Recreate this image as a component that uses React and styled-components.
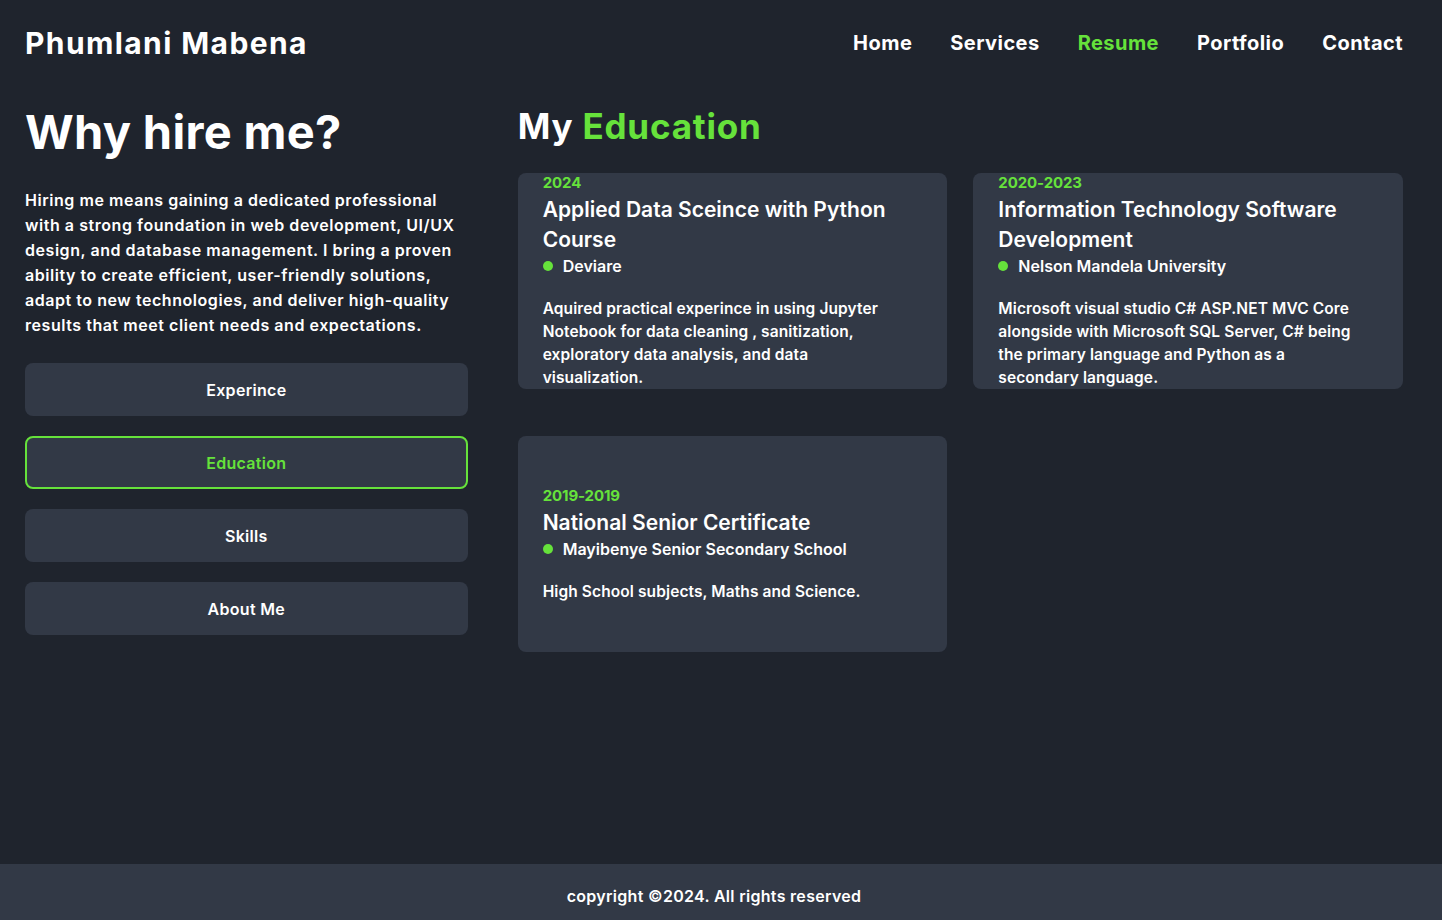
import React from "react";
import styled, { createGlobalStyle } from "styled-components";

const GREEN = "#66e23b";
const BG = "#1f242d";
const PANEL = "#323946";

const GlobalStyle = createGlobalStyle`
  *, *::before, *::after { box-sizing: border-box; }
  html, body { margin: 0; padding: 0; }
  body {
    background: ${BG};
    color: #ffffff;
    font-family: Inter, "Noto Sans", "Liberation Sans", sans-serif;
    -webkit-font-smoothing: antialiased;
  }
`;

const Page = styled.div`
  min-height: 100vh;
  display: flex;
  flex-direction: column;
`;

const Header = styled.header`
  height: 84px;
  padding: 0 39px 0 25px;
  display: flex;
  align-items: center;
  justify-content: space-between;
`;

const Logo = styled.a`
  font-size: 30px;
  font-weight: 700;
  letter-spacing: 1.4px;
  color: #ffffff;
  text-decoration: none;
  margin-top: 1px;
`;

const Nav = styled.nav`
  display: flex;
  align-items: center;
  gap: 38px;
  margin-top: 2px;
`;

const NavLink = styled.a`
  font-size: 20px;
  font-weight: 700;
  letter-spacing: 0.45px;
  color: ${(p) => (p.$active ? GREEN : "#ffffff")};
  text-decoration: none;
`;

const Main = styled.main`
  flex: 1;
  padding: 20px 39px 0 25px;
  display: grid;
  grid-template-columns: 1fr 2fr;
  column-gap: 50px;
  align-items: start;
`;

const LeftColumn = styled.section`
  display: flex;
  flex-direction: column;
`;

const BigTitle = styled.h2`
  margin: 0;
  font-size: 47px;
  line-height: 56px;
  font-weight: 700;
  letter-spacing: 0.3px;
`;

const Intro = styled.p`
  margin: 28px 0 25px;
  font-size: 16px;
  line-height: 25px;
  font-weight: 600;
  letter-spacing: 0.55px;
`;

const TabList = styled.div`
  display: flex;
  flex-direction: column;
  gap: 20px;
`;

const TabButton = styled.button`
  height: 53px;
  width: 100%;
  border-radius: 8px;
  border: 2px solid ${(p) => (p.$active ? GREEN : "transparent")};
  background: ${PANEL};
  color: ${(p) => (p.$active ? GREEN : "#ffffff")};
  font-family: inherit;
  font-size: 16px;
  font-weight: 600;
  letter-spacing: 0.3px;
  cursor: pointer;
`;

const RightColumn = styled.section`
  display: flex;
  flex-direction: column;
`;

const SectionTitle = styled.h2`
  margin: 1px 0 26px;
  font-size: 35px;
  line-height: 42px;
  font-weight: 700;
  letter-spacing: 0.8px;
`;

const Accent = styled.span`
  color: ${GREEN};
`;

const CardGrid = styled.div`
  display: grid;
  grid-template-columns: 1fr 1fr;
  column-gap: 26px;
  row-gap: 47px;
`;

const Card = styled.article`
  height: 216px;
  background: ${PANEL};
  border-radius: 8px;
  padding: 0 25px;
  display: flex;
  flex-direction: column;
  justify-content: center;
`;

const Year = styled.span`
  color: ${GREEN};
  font-size: 15px;
  line-height: 20px;
  font-weight: 700;
  letter-spacing: -0.1px;
`;

const CardTitle = styled.h3`
  margin: 0;
  font-size: 21px;
  line-height: 30px;
  font-weight: 600;
  padding-top: 2px;
`;

const Institution = styled.div`
  display: flex;
  align-items: center;
  gap: 10px;
  font-size: 16px;
  line-height: 22px;
  font-weight: 600;

  &::before {
    content: "";
    width: 10px;
    height: 10px;
    border-radius: 50%;
    background: ${GREEN};
    flex-shrink: 0;
  }
`;

const CardText = styled.p`
  margin: 20px 0 0;
  max-width: 358px;
  font-size: 15.5px;
  line-height: 23px;
  font-weight: 600;
  letter-spacing: 0.1px;
`;

const Footer = styled.footer`
  height: 56px;
  background: ${PANEL};
  padding: 8px 39px 0 25px;
  display: flex;
  align-items: center;
  justify-content: center;
  font-size: 16px;
  font-weight: 600;
  letter-spacing: 0.3px;
`;

const education = [
  {
    year: "2024",
    title: "Applied Data Sceince with Python Course",
    place: "Deviare",
    text: "Aquired practical experince in using Jupyter Notebook for data cleaning , sanitization, exploratory data analysis, and data visualization.",
  },
  {
    year: "2020-2023",
    title: "Information Technology Software Development",
    place: "Nelson Mandela University",
    text: "Microsoft visual studio C# ASP.NET MVC Core alongside with Microsoft SQL Server, C# being the primary language and Python as a secondary language.",
  },
  {
    year: "2019-2019",
    title: "National Senior Certificate",
    place: "Mayibenye Senior Secondary School",
    text: "High School subjects, Maths and Science.",
  },
];

const tabs = ["Experince", "Education", "Skills", "About Me"];
const links = ["Home", "Services", "Resume", "Portfolio", "Contact"];

export default function App() {
  return (
    <Page>
      <GlobalStyle />
      <Header>
        <Logo href="#">Phumlani Mabena</Logo>
        <Nav>
          {links.map((l) => (
            <NavLink key={l} href="#" $active={l === "Resume"}>
              {l}
            </NavLink>
          ))}
        </Nav>
      </Header>
      <Main>
        <LeftColumn>
          <BigTitle>Why hire me?</BigTitle>
          <Intro>
            Hiring me means gaining a dedicated professional with a strong
            foundation in web development, UI/UX design, and database
            management. I bring a proven ability to create efficient,
            user-friendly solutions, adapt to new technologies, and deliver
            high-quality results that meet client needs and expectations.
          </Intro>
          <TabList>
            {tabs.map((t) => (
              <TabButton key={t} $active={t === "Education"}>
                {t}
              </TabButton>
            ))}
          </TabList>
        </LeftColumn>
        <RightColumn>
          <SectionTitle>
            My <Accent>Education</Accent>
          </SectionTitle>
          <CardGrid>
            {education.map((e) => (
              <Card key={e.title}>
                <Year>{e.year}</Year>
                <CardTitle>{e.title}</CardTitle>
                <Institution>{e.place}</Institution>
                <CardText>{e.text}</CardText>
              </Card>
            ))}
          </CardGrid>
        </RightColumn>
      </Main>
      <Footer>copyright ©2024. All rights reserved</Footer>
    </Page>
  );
}
